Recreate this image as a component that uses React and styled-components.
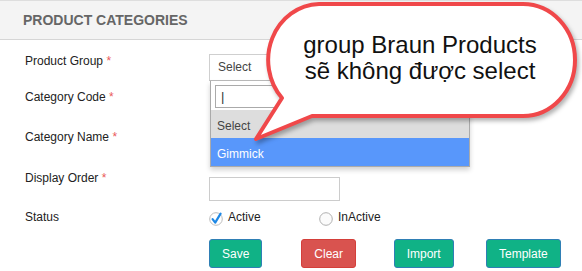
import React from "react";
import styled, { createGlobalStyle } from "styled-components";

const GlobalStyle = createGlobalStyle`
  html, body {
    margin: 0;
    padding: 0;
    background: #ffffff;
  }
  body {
    font-family: "Liberation Sans", Arial, sans-serif;
  }
`;

const Green = "#10b286";
const Red = "#d9534f";

const Page = styled.div`
  position: relative;
  width: 582px;
  height: 271px;
  overflow: hidden;
  background: #fff;
`;

const Header = styled.div`
  height: 38px;
  border-top: 1px solid #dedede;
  border-bottom: 1px solid #d6d6d6;
  background: #f4f4f4;
  display: flex;
  align-items: center;
  padding-left: 23px;
`;

const Title = styled.h3`
  margin: 0;
  font-size: 14px;
  line-height: 16px;
  font-weight: bold;
  color: #666;
`;

const Form = styled.div`
  padding: 13px 0 0 25px;
`;

const Row = styled.div`
  display: grid;
  grid-template-columns: 184px 1fr;
  height: ${(p) => p.$h}px;
`;

const Label = styled.label`
  font-size: 12px;
  line-height: 16px;
  color: #222;
`;

const Req = styled.span`
  color: #ea5a5a;
`;

const Field = styled.div`
  position: relative;
  margin-top: ${(p) => p.$offset || 0}px;
`;

const SelectBox = styled.div`
  box-sizing: border-box;
  width: 261px;
  height: 27px;
  border: 1px solid #cfcfcf;
  border-bottom-color: #bbb;
  padding-left: 8px;
  font-size: 12px;
  line-height: 25px;
  color: #444;
`;

const Input = styled.div`
  box-sizing: border-box;
  width: 131px;
  height: 24px;
  border: 1px solid #cccccc;
  background: #fff;
`;

const Dropdown = styled.div`
  position: absolute;
  top: 27px;
  left: 1px;
  width: 260px;
  box-sizing: border-box;
  border: 1px solid #aaa;
  border-top: none;
  background: #fff;
  box-shadow: 0 3px 5px rgba(0, 0, 0, 0.18);
  padding-top: 4px;
`;

const Search = styled.div`
  box-sizing: border-box;
  height: 23px;
  margin: 0 4px 2px 4px;
  border: 1px solid #aaa;
  padding-left: 5px;
  font-size: 13px;
  line-height: 21px;
  color: #333;
`;

const Option = styled.div`
  height: 28px;
  box-sizing: border-box;
  padding: 8px 6px 0;
  font-size: 12px;
  line-height: 16px;
  background: ${(p) => (p.$active ? "#5897fb" : "#dddddd")};
  color: ${(p) => (p.$active ? "#fff" : "#444")};
`;

const Choices = styled.div`
  display: flex;
  align-items: flex-start;
`;

const Choice = styled.div`
  width: 110px;
  display: flex;
  align-items: flex-start;
  gap: 5px;
  font-size: 12px;
  line-height: 16px;
  color: #222;

  svg {
    flex: none;
    margin-top: 0px;
  }

  span {
    margin-top: -3px;
  }
`;

const Buttons = styled.div`
  display: grid;
  grid-template-columns: repeat(4, 92.33px);
  align-items: start;
`;

const Button = styled.button`
  justify-self: start;
  height: 29px;
  padding: 0 12px;
  border-radius: 3px;
  font-family: "Liberation Sans", Arial, sans-serif;
  font-size: 12px;
  color: #fff;
  background: ${(p) => (p.$danger ? Red : Green)};
  border: 1px solid ${(p) => (p.$danger ? "#d43f3a" : "#2f7fb5")};
`;

const Callout = styled.div`
  position: absolute;
  left: 250px;
  top: 0;
  width: 332px;
  height: 145px;

  svg {
    position: absolute;
    left: 0;
    top: 0;
    filter: drop-shadow(2px 3px 2px rgba(0, 0, 0, 0.3));
  }
`;

const CalloutText = styled.div`
  position: absolute;
  left: 15px;
  top: 32px;
  width: 310px;
  text-align: center;
  font-size: 24px;
  line-height: 26px;
  color: #111;
`;

function CheckIcon() {
  return (
    <svg width="14" height="14" viewBox="0 0 14 14" style={{ overflow: "visible" }}>
      <circle cx="7" cy="7" r="6.3" fill="#fff" stroke="#bdbdbd" strokeWidth="1" />
      <path d="M3.6 7.2 L6.2 10.6 L11.6 1.6" fill="none" stroke="#1e88e5" strokeWidth="2.2" strokeLinecap="round" strokeLinejoin="round" />
    </svg>
  );
}

function RadioIcon() {
  return (
    <svg width="14" height="14" viewBox="0 0 14 14">
      <circle cx="7" cy="7" r="6.3" fill="#fbfbfb" stroke="#b0b0b0" strokeWidth="1" />
    </svg>
  );
}

function Bubble() {
  return (
    <svg width="332" height="145" viewBox="250 0 332 145">
      <path
        d="M319 4 H523 A52 56 0 0 1 523 116 H312 L256 139 L282 98 A52 56 0 0 1 319 4 Z"
        fill="#fff"
        stroke="#f0484a"
        strokeWidth="4"
        strokeLinejoin="round"
      />
    </svg>
  );
}

export default function App() {
  return (
    <Page>
      <GlobalStyle />
      <Header>
        <Title>PRODUCT CATEGORIES</Title>
      </Header>
      <Form>
        <Row $h={36}>
          <Label>
            Product Group <Req>*</Req>
          </Label>
          <Field $offset={1}>
            <SelectBox>Select</SelectBox>
            <Dropdown>
              <Search>|</Search>
              <Option>Select</Option>
              <Option $active>Gimmick</Option>
            </Dropdown>
          </Field>
        </Row>
        <Row $h={40}>
          <Label>
            Category Code <Req>*</Req>
          </Label>
          <Field />
        </Row>
        <Row $h={41}>
          <Label>
            Category Name <Req>*</Req>
          </Label>
          <Field />
        </Row>
        <Row $h={39}>
          <Label>
            Display Order <Req>*</Req>
          </Label>
          <Field $offset={7}>
            <Input />
          </Field>
        </Row>
        <Row $h={30}>
          <Label>Status</Label>
          <Field $offset={3}>
            <Choices>
              <Choice>
                <CheckIcon />
                <span>Active</span>
              </Choice>
              <Choice>
                <RadioIcon />
                <span>InActive</span>
              </Choice>
            </Choices>
          </Field>
        </Row>
        <Row $h={32}>
          <span />
          <Buttons>
            <Button>Save</Button>
            <Button $danger>Clear</Button>
            <Button>Import</Button>
            <Button>Template</Button>
          </Buttons>
        </Row>
      </Form>
      <Callout>
        <Bubble />
        <CalloutText>
          group Braun Products
          <br />
          sẽ không được select
        </CalloutText>
      </Callout>
    </Page>
  );
}
